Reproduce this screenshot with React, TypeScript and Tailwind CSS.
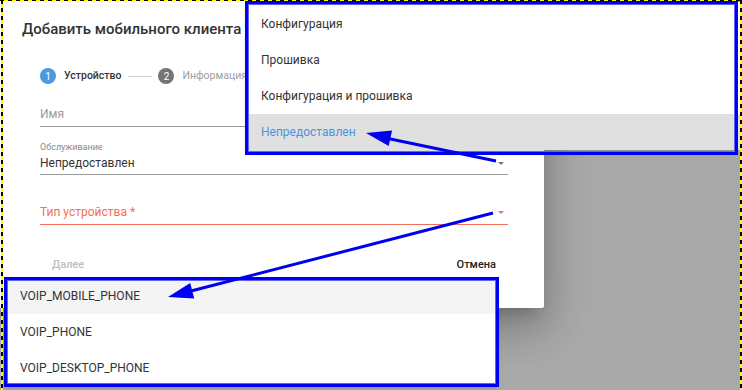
import React from 'react';

const serviceOptions = [
  "Конфигурация",
  "Прошивка",
  "Конфигурация и прошивка",
  "Непредоставлен"
];

const deviceTypes = ["VOIP_MOBILE_PHONE", "VOIP_PHONE", "VOIP_DESKTOP_PHONE"];

function Caret({ color }: { color: string }) {
  return (
    <svg width="6" height="3" viewBox="0 0 6 3" className="shrink-0">
      <path d="M0 0 L6 0 L3 3 Z" fill={color} />
    </svg>
  );
}

export default function App() {
  return (
    <div className="relative w-[742px] h-[390px] overflow-hidden bg-[#a9a9a9] font-['Roboto',sans-serif]">
      {/* dialog */}
      <div className="w-[544px] h-[308px] bg-white rounded-br-[2px] shadow-[0_11px_15px_-7px_rgba(0,0,0,0.2),0_24px_38px_3px_rgba(0,0,0,0.14),0_9px_46px_8px_rgba(0,0,0,0.12)] flex flex-col">
        <h2 className="pt-[17px] pl-[22px] text-[15px] leading-6 font-medium text-[#333]">
          Добавить мобильного клиента
        </h2>

        <div className="mt-[27px] ml-[40px] flex items-center h-4">
          <div className="w-4 h-4 rounded-full bg-[#4a9ae1] text-white text-[10px] flex items-center justify-center">1</div>
          <span className="ml-2 text-[10.5px] font-medium text-[#333]">Устройство</span>
          <div className="ml-[7px] w-6 h-px bg-[#d0d0d0]" />
          <div className="ml-[6px] w-4 h-4 rounded-full bg-[#757575] text-white text-[10px] flex items-center justify-center">2</div>
          <span className="ml-2 text-[10.5px] text-[#9e9e9e]">Информация</span>
        </div>

        <div className="ml-[40px] mr-[36px] flex flex-col">
          <div className="mt-[22px] pb-[4px] border-b border-[#9a9a9a] text-[12px] leading-4 text-[#9b9b9b]">Имя</div>

          <div className="mt-[14px] pb-[3px] border-b border-[#9a9a9a]">
            <div className="text-[9px] leading-3 text-[#8a8a8a]">Обслуживание</div>
            <div className="mt-[2px] flex items-center justify-between pr-[4px]">
              <span className="text-[12px] leading-4 text-[#333]">Непредоставлен</span>
              <Caret color="#757575" />
            </div>
          </div>

          <div className="mt-[29px] pb-[4px] border-b border-[#f36f5b] flex items-center justify-between pr-[4px]">
            <span className="text-[12px] leading-4 text-[#f36f5b]">Тип устройства *</span>
            <Caret color="#f36f5b" />
          </div>

          <div className="mt-[32px] flex justify-between">
            <span className="px-3 text-[11px] leading-4 font-medium text-[#bdbdbd]">Далее</span>
            <span className="px-3 text-[11px] leading-4 font-medium text-[#222]">Отмена</span>
          </div>
        </div>
      </div>

      {/* service select menu */}
      <div className="absolute left-[245px] top-[2px] w-[497px] pt-[4px] bg-white shadow-md">
        {serviceOptions.map((o, i) => (
          <div
            key={o}
            className={
              i === 3
                ? "h-9 pl-4 flex items-center text-[12px] bg-[#e0e0e0] text-[#4a94dc]"
                : "h-9 pl-4 flex items-center text-[12px] text-[#333]"
            }
          >
            {o}
          </div>
        ))}
      </div>

      {/* device type menu */}
      <div className="absolute left-[4px] top-[278px] w-[494px] bg-white shadow-md">
        {deviceTypes.map((o, i) => (
          <div
            key={o}
            className={
              i === 0
                ? "h-9 pl-4 flex items-center text-[12px] bg-[#f4f4f4] text-[#333]"
                : "h-9 pl-4 flex items-center text-[12px] text-[#333]"
            }
          >
            {o}
          </div>
        ))}
      </div>

      {/* annotation boxes */}
      <div className="absolute left-[245px] top-[1px] w-[493px] h-[154px] border-[3px] border-[#0000f0] shadow-[inset_0_0_0_1px_#6262ff] pointer-events-none" />
      <div className="absolute left-[4px] top-[277px] w-[495px] h-[110px] border-[3px] border-[#0000f0] shadow-[inset_0_0_0_1px_#6262ff] pointer-events-none" />

      {/* annotation arrows */}
      <svg className="absolute inset-0 pointer-events-none" width="742" height="390" viewBox="0 0 742 390">
        <line x1="496" y1="161" x2="388" y2="138.5" stroke="#0000f0" strokeWidth="3" />
        <polygon points="366,133 388.7,146.1 392.1,130.5" fill="#0000f0" />
        <line x1="493" y1="213" x2="191" y2="291" stroke="#0000f0" strokeWidth="3" />
        <polygon points="168,297 194.2,298.4 190.2,283" fill="#0000f0" />
      </svg>

      {/* selection marquee */}
      <div className="absolute left-0 right-0 top-0 h-px bg-[repeating-linear-gradient(to_right,#000_0,#000_4px,#ff0_4px,#ff0_8px)]" />
      <div className="absolute left-[1px] top-0 bottom-0 w-[2px] bg-[repeating-linear-gradient(to_bottom,#000_0,#000_4px,#ff0_4px,#ff0_8px)]" />
      <div className="absolute left-[740px] top-0 bottom-0 w-[2px] bg-[repeating-linear-gradient(to_bottom,#000_0,#000_4px,#ff0_4px,#ff0_8px)]" />
    </div>
  );
}
